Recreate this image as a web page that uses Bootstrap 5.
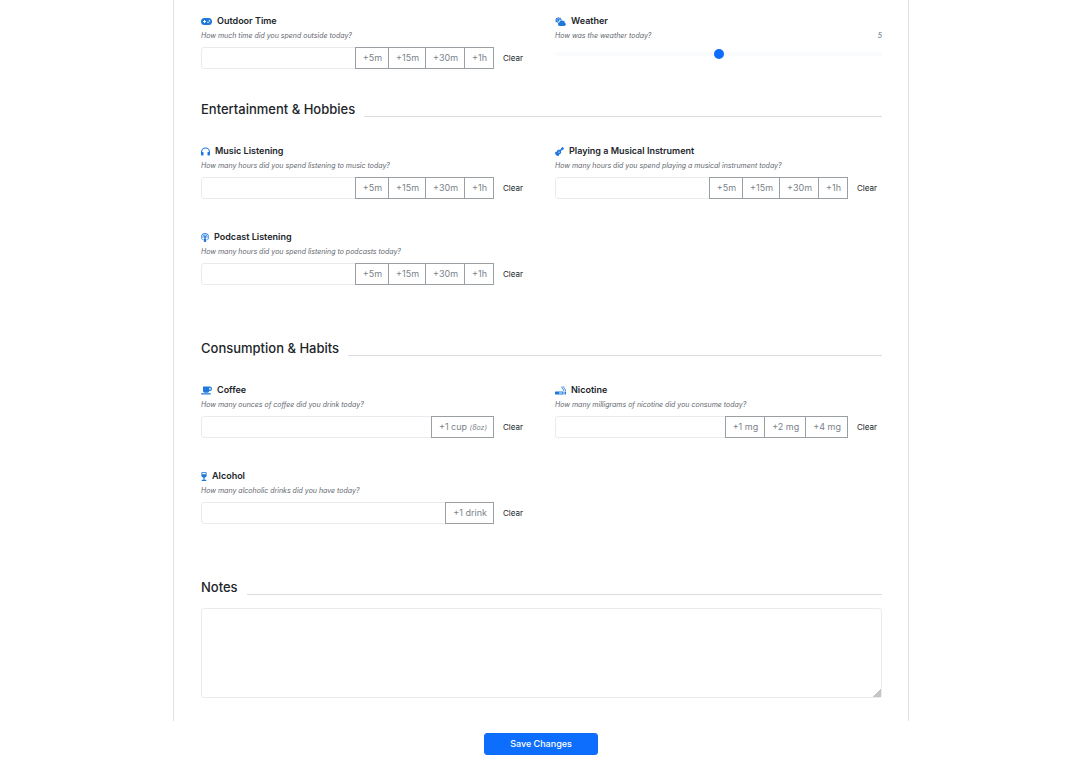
<!DOCTYPE html>
<html lang="en">
<head>
<meta charset="utf-8">
<meta name="viewport" content="width=device-width, initial-scale=1">
<title>Daily Log</title>
<link href="https://cdn.jsdelivr.net/npm/bootstrap@5.3.0/dist/css/bootstrap.min.css" rel="stylesheet">
<style>
body { font-family: Inter, "Liberation Sans", sans-serif; font-size: 9px; line-height: 14px; color: #212529; background: #fff; padding-left: 2px; }
.log-sheet { max-width: 736px; border: solid #dee2e6; border-width: 0 1px; padding: 14px 26px 23px 27px; }
.log-fields { display: grid; grid-template-columns: 1fr 1fr; column-gap: 27px; row-gap: 31px; }
.log-section { margin-bottom: 53px; }
.log-section.compact { margin-bottom: 30px; }
.log-title { font-size: 13px; line-height: 20px; font-weight: 500; margin: 0 0 25px; }
.log-title::after { content: ""; flex: 1; border-bottom: 1px solid #dadcdf; margin-left: 9px; height: 18px; }
.log-notes .log-title { margin-bottom: 11px; }
.log-name { font-weight: 600; gap: 5px; height: 14px; }
.log-name svg { height: 9px; fill: #1f78dc; }
.icon-wide { width: 11px; }
.icon-mid { width: 9px; }
.icon-round { width: 8px; }
.icon-slim { width: 6px; }
.log-hint { font-size: 7px; line-height: 16px; font-style: italic; color: #5f676e; margin-bottom: 3px; }
.log-entry { height: 22px; gap: 2px; }
.log-entry .form-control { min-height: 0; padding: 0 6px; font-size: 9px; border-color: #e9ecef; border-radius: 3px; }
.log-entry .input-group .btn { --bs-btn-color: #7b838a; --bs-btn-border-color: #9a9fa4; font-size: 9px; line-height: 14px; padding: 3px 6px 3px 7px; border-radius: 0; }
.log-entry .btn i { font-size: 7px; }
.log-entry .btn-clear { font-size: 8px; line-height: 12px; padding: 4px 5px 4px 7px; border: 0; }
.log-range { display: block; height: 10px; margin-top: 5px; --bs-border-width: 0; }
.log-range::-webkit-slider-runnable-track { height: 4px; background: #fafbfc; }
.log-range::-webkit-slider-thumb { width: 10px; height: 10px; margin-top: -3px; }
.log-textarea { height: 90px; border-color: #e9ecef; border-radius: 3px; font-size: 9px; }
.log-textarea::-webkit-resizer { background: linear-gradient(135deg, transparent 70%, #c4c7ca 70%); }
.log-save { width: 114px; height: 22px; padding: 0; font-size: 9px; font-weight: 500; line-height: 14px; border-radius: 3px; }
</style>
</head>
<body>
<svg class="d-none" xmlns="http://www.w3.org/2000/svg">
  <symbol id="i-game" viewBox="0 0 22 18"><path fill-rule="evenodd" d="M7 2h8a7 7 0 0 1 0 14H7A7 7 0 0 1 7 2zm-1 4v2H4v2h2v2h2v-2h2V8H8V6zm8 3a1.500 1.500 0 1 0 .1 3 1.500 1.500 0 0 0-.1-3zm3-3a1.500 1.500 0 1 0 .1 3 1.500 1.500 0 0 0-.1-3z"/></symbol>
  <symbol id="i-weather" viewBox="0 0 22 18"><path d="M7 0l1.500 2 2.500-.8.400 2.300 2.200.7-.9 1.500C10 5.500 8.500 7 8 9.200c-1.600.4-2.800 1.500-3.300 3L3.500 10.500 1 10.300l.8-2.500L0 6l2-1.500L2 2l2.500.2z"/><circle cx="6.800" cy="6" r="3" fill="none" stroke="#fff" stroke-width=".8"/><path d="M19.300 11.700a3.500 3.500 0 0 0-3.800-4 4 4 0 0 0-6.700 2.800A3.800 3.800 0 0 0 9.300 18h9.200a3.200 3.200 0 0 0 .8-6.300z"/></symbol>
  <symbol id="i-phones" viewBox="0 0 18 18"><path d="M9 1a9 9 0 0 0-9 9v5c0 1.200.9 2 2 2h2c.6 0 1-.4 1-1v-5c0-.6-.4-1-1-1H2.200a6.800 6.800 0 0 1 13.600 0H14c-.6 0-1 .4-1 1v5c0 .6.4 1 1 1h2c1.100 0 2-.8 2-2v-5a9 9 0 0 0-9-9z"/></symbol>
  <symbol id="i-guitar" viewBox="0 0 18 18"><path fill-rule="evenodd" d="M17.700 2.400 15.600.3c-.4-.4-1-.4-1.400 0l-1.800 1.800-.6 1.800-2.300 2.300c-1.700-.8-3.500-.7-4.600.4-.5.5-.8 1-.9 1.700-.3.8-1 1.300-1.900 1.400C-.5 10-.7 13.300 2 16s6 2.500 6.300-.1c.1-.9.600-1.600 1.400-1.900.7-.1 1.200-.4 1.700-.9 1.100-1.100 1.200-2.900.4-4.600l2.300-2.300 1.800-.6 1.800-1.800c.4-.4.4-1 0-1.400zM8 9a1.200 1.200 0 1 1-.1 2.400A1.200 1.200 0 0 1 8 9z"/></symbol>
  <symbol id="i-podcast" viewBox="0 0 16 18"><path d="M8 0a8 8 0 0 0-4.400 14.600l-.4-2A6.400 6.400 0 1 1 12.800 12.600l-.4 2A8 8 0 0 0 8 0zm0 3a5 5 0 0 0-4.300 7.500c.3-.6.800-1 1.400-1.300a3.300 3.300 0 1 1 5.800 0c.6.300 1.100.7 1.400 1.300A5 5 0 0 0 8 3z"/><circle cx="8" cy="7.800" r="2.100"/><path d="M8 10.700c-1.600 0-2.800.4-2.800 1.900 0 1.200.4 3.300.7 4.400.3.800 1.200 1 2.100 1s1.800-.2 2.100-1c.3-1.100.7-3.200.7-4.400 0-1.500-1.200-1.900-2.800-1.900z"/></symbol>
  <symbol id="i-coffee" viewBox="0 0 22 18"><path fill-rule="evenodd" d="M5 1h12.500a4.500 4.500 0 0 1 0 9H16.500A3.500 3.500 0 0 1 13 13.500H7.500A3.500 3.500 0 0 1 4 10V2c0-.6.4-1 1-1zm11.500 2.500v4h1a2 2 0 0 0 0-4zM0 14.500h20c0 1.600-1 2.500-2.300 2.500H2.500C1 17 0 16 0 14.500z"/></symbol>
  <symbol id="i-smoke" viewBox="0 0 22 18"><path fill-rule="evenodd" d="M1 11h15v6H1c-.6 0-1-.4-1-1v-4c0-.6.4-1 1-1zm7 2v2h6.500v-2zM17 11h2v6h-2zM20 11h2v6h-2z"/><path d="M14 1v2.500C14 6 17.500 5.500 17.500 9.500M17.500 1v2C17.500 5 21 5.500 21 9.500" fill="none" stroke="#1f78dc" stroke-width="2"/></symbol>
  <symbol id="i-wine" viewBox="0 0 12 18"><path fill-rule="evenodd" d="M1.300 0h9.400l.7 6.200a5.200 5.200 0 0 1-4.300 5.500v4h2c1 0 1.700.9 1.700 2.300H1.200c0-1.400.7-2.300 1.700-2.300h2v-4A5.200 5.200 0 0 1 .6 6.200zm1.500 1.700-.2 2.600h6.800l-.2-2.600z"/></symbol>
</svg>
<main class="log-sheet mx-auto">
  <section class="log-section compact">
    <div class="log-fields">
      <div>
        <label class="log-name d-flex align-items-center" for="outdoor"><svg class="icon-wide" aria-hidden="true"><use href="#i-game"/></svg>Outdoor Time</label>
        <div class="log-hint">How much time did you spend outside today?</div>
        <div class="log-entry d-flex">
          <div class="input-group flex-nowrap"><input class="form-control" id="outdoor" type="text"><button class="btn btn-outline-secondary" type="button">+5m</button><button class="btn btn-outline-secondary" type="button">+15m</button><button class="btn btn-outline-secondary" type="button">+30m</button><button class="btn btn-outline-secondary" type="button">+1h</button></div>
          <button class="btn btn-clear" type="button">Clear</button>
        </div>
      </div>
      <div>
        <label class="log-name d-flex align-items-center" for="weather"><svg class="icon-wide" aria-hidden="true"><use href="#i-weather"/></svg>Weather</label>
        <div class="log-hint d-flex justify-content-between mb-0"><span>How was the weather today?</span><output for="weather">5</output></div>
        <input class="form-range log-range" id="weather" type="range" min="0" max="10" value="5">
      </div>
    </div>
  </section>

  <section class="log-section">
    <h2 class="log-title d-flex">Entertainment &amp; Hobbies</h2>
    <div class="log-fields">
      <div>
        <label class="log-name d-flex align-items-center" for="music"><svg class="icon-mid" aria-hidden="true"><use href="#i-phones"/></svg>Music Listening</label>
        <div class="log-hint">How many hours did you spend listening to music today?</div>
        <div class="log-entry d-flex">
          <div class="input-group flex-nowrap"><input class="form-control" id="music" type="text"><button class="btn btn-outline-secondary" type="button">+5m</button><button class="btn btn-outline-secondary" type="button">+15m</button><button class="btn btn-outline-secondary" type="button">+30m</button><button class="btn btn-outline-secondary" type="button">+1h</button></div>
          <button class="btn btn-clear" type="button">Clear</button>
        </div>
      </div>
      <div>
        <label class="log-name d-flex align-items-center" for="instrument"><svg class="icon-mid" aria-hidden="true"><use href="#i-guitar"/></svg>Playing a Musical Instrument</label>
        <div class="log-hint">How many hours did you spend playing a musical instrument today?</div>
        <div class="log-entry d-flex">
          <div class="input-group flex-nowrap"><input class="form-control" id="instrument" type="text"><button class="btn btn-outline-secondary" type="button">+5m</button><button class="btn btn-outline-secondary" type="button">+15m</button><button class="btn btn-outline-secondary" type="button">+30m</button><button class="btn btn-outline-secondary" type="button">+1h</button></div>
          <button class="btn btn-clear" type="button">Clear</button>
        </div>
      </div>
      <div>
        <label class="log-name d-flex align-items-center" for="podcast"><svg class="icon-round" aria-hidden="true"><use href="#i-podcast"/></svg>Podcast Listening</label>
        <div class="log-hint">How many hours did you spend listening to podcasts today?</div>
        <div class="log-entry d-flex">
          <div class="input-group flex-nowrap"><input class="form-control" id="podcast" type="text"><button class="btn btn-outline-secondary" type="button">+5m</button><button class="btn btn-outline-secondary" type="button">+15m</button><button class="btn btn-outline-secondary" type="button">+30m</button><button class="btn btn-outline-secondary" type="button">+1h</button></div>
          <button class="btn btn-clear" type="button">Clear</button>
        </div>
      </div>
    </div>
  </section>

  <section class="log-section">
    <h2 class="log-title d-flex">Consumption &amp; Habits</h2>
    <div class="log-fields">
      <div>
        <label class="log-name d-flex align-items-center" for="coffee"><svg class="icon-wide" aria-hidden="true"><use href="#i-coffee"/></svg>Coffee</label>
        <div class="log-hint">How many ounces of coffee did you drink today?</div>
        <div class="log-entry d-flex">
          <div class="input-group flex-nowrap"><input class="form-control" id="coffee" type="text"><button class="btn btn-outline-secondary text-nowrap" type="button">+1 cup <i>(8oz)</i></button></div>
          <button class="btn btn-clear" type="button">Clear</button>
        </div>
      </div>
      <div>
        <label class="log-name d-flex align-items-center" for="nicotine"><svg class="icon-wide" aria-hidden="true"><use href="#i-smoke"/></svg>Nicotine</label>
        <div class="log-hint">How many milligrams of nicotine did you consume today?</div>
        <div class="log-entry d-flex">
          <div class="input-group flex-nowrap"><input class="form-control" id="nicotine" type="text"><button class="btn btn-outline-secondary text-nowrap" type="button">+1 mg</button><button class="btn btn-outline-secondary text-nowrap" type="button">+2 mg</button><button class="btn btn-outline-secondary text-nowrap" type="button">+4 mg</button></div>
          <button class="btn btn-clear" type="button">Clear</button>
        </div>
      </div>
      <div>
        <label class="log-name d-flex align-items-center" for="alcohol"><svg class="icon-slim" aria-hidden="true"><use href="#i-wine"/></svg>Alcohol</label>
        <div class="log-hint">How many alcoholic drinks did you have today?</div>
        <div class="log-entry d-flex">
          <div class="input-group flex-nowrap"><input class="form-control" id="alcohol" type="text"><button class="btn btn-outline-secondary text-nowrap" type="button">+1 drink</button></div>
          <button class="btn btn-clear" type="button">Clear</button>
        </div>
      </div>
    </div>
  </section>

  <section class="log-notes">
    <h2 class="log-title d-flex"><label for="notes">Notes</label></h2>
    <textarea class="form-control log-textarea" id="notes"></textarea>
  </section>
</main>
<div class="d-flex justify-content-center pt-2 mt-1 pb-3">
  <button class="btn btn-primary log-save" type="submit">Save Changes</button>
</div>
<script src="https://cdn.jsdelivr.net/npm/bootstrap@5.3.0/dist/js/bootstrap.bundle.min.js"></script>
</body>
</html>
